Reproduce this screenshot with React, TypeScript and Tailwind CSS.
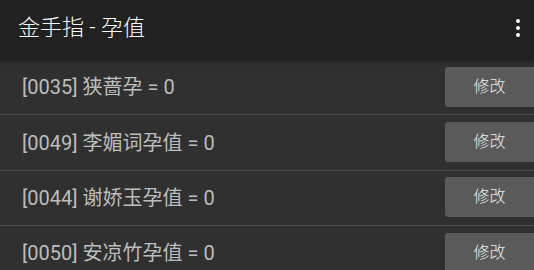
import React from 'react';

const rows = [
  { id: '0035', name: '狭蔷孕', value: 0 },
  { id: '0049', name: '李媚词孕值', value: 0 },
  { id: '0044', name: '谢娇玉孕值', value: 0 },
  { id: '0050', name: '安凉竹孕值', value: 0 },
];

export default function App() {
  return (
    <main className="w-[534px] h-[270px] overflow-hidden bg-[#303030] font-[Roboto,'Noto_Sans_CJK_SC',sans-serif]">
      <header className="relative z-10 h-[60px] flex items-center justify-between pl-[18px] pr-[14px] bg-[#212121] shadow-[0_2px_4px_rgba(0,0,0,0.35)]">
        <h1 className="text-[22px] font-light text-white leading-none -mt-[4px]">金手指 - 孕值</h1>
        <div className="flex flex-col items-center gap-[3px] -mt-[4px]">
          <span className="w-[4px] h-[4px] rounded-full bg-white" />
          <span className="w-[4px] h-[4px] rounded-full bg-white" />
          <span className="w-[4px] h-[4px] rounded-full bg-white" />
        </div>
      </header>

      <ul>
        {rows.map((row) => (
          <li
            key={row.id}
            className="h-[55.4px] flex items-center border-b-[1.5px] border-[#474747] pl-[22px]"
          >
            <span className="text-[20px] text-[#bdbdbd] leading-none">
              [{row.id}] {row.name} = {row.value}
            </span>
            <button className="ml-auto shrink-0 w-[95px] h-[40px] -mr-[6px] rounded-[3px] bg-[#5a5a5a] text-[#eeeeee] text-[16px] font-light pr-[6px] -mt-[1px]">
              修改
            </button>
          </li>
        ))}
      </ul>
    </main>
  );
}
